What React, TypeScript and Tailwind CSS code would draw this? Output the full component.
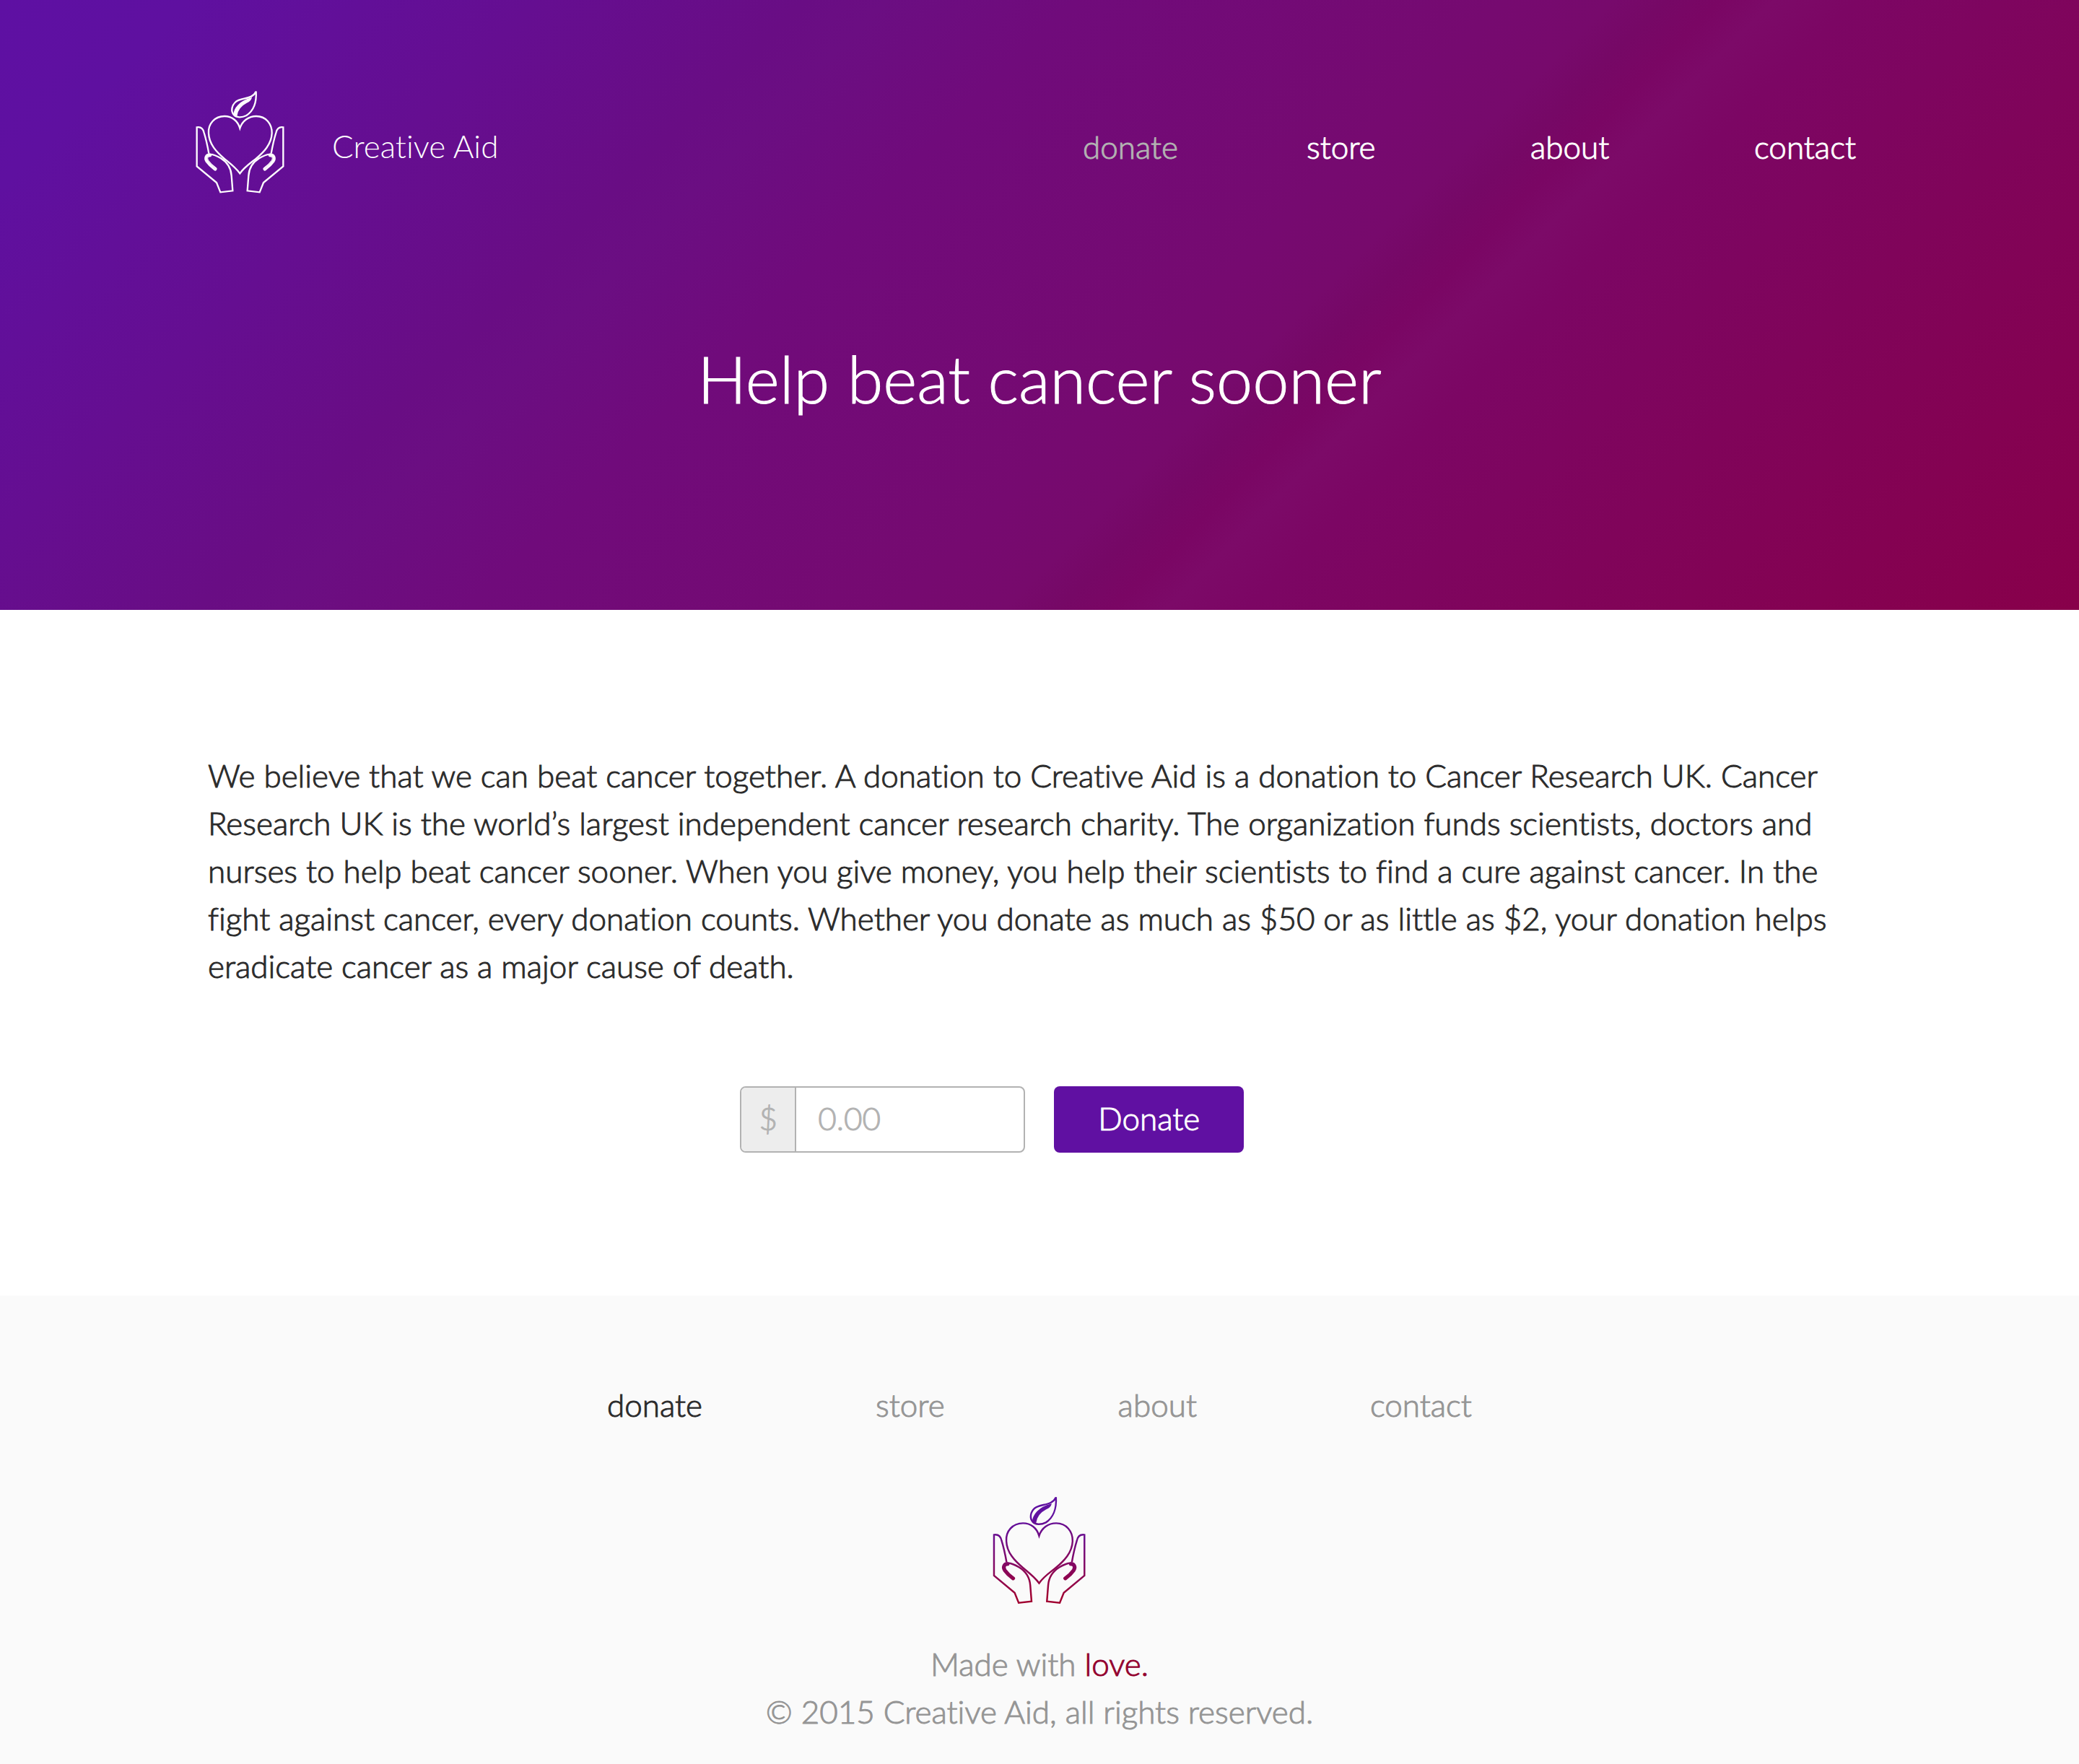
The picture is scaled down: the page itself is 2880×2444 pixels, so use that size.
import React from 'react';

const links = ['donate', 'store', 'about', 'contact'];

function Hand({ accent }: { accent: string }) {
  return (
    <>
      <path d="M118 308C113 280 108 254 98 222C94 203 82 197 68 199L68 361L150 429L166 469L217 463L212 400C210 370 195 345 168 328C150 317 134 309 118 312" />
      <path d="M122 315C108 314 103 328 111 340C121 354 133 364 144 372" strokeWidth="15" strokeLinecap="round" />
      <path d="M117 319C108 324 112 335 120 345C128 355 136 362 144 371" stroke={accent} strokeWidth="3" strokeLinecap="round" />
    </>
  );
}

function Logo({ className, stroke, accent }: { className: string; stroke: string; accent: string }) {
  return (
    <svg viewBox="0 0 480 510" className={className} fill="none" stroke={stroke} strokeWidth="7" aria-hidden="true">
      <defs>
        <linearGradient id="brand" gradientUnits="userSpaceOnUse" x1="200" y1="130" x2="247" y2="440">
          <stop offset="0" stopColor="#6010a0" />
          <stop offset="1" stopColor="#a00030" />
        </linearGradient>
      </defs>
      <path d="M247 203C238 172 214 153 183 153C142 153 114 185 117 224C119 270 150 302 184 331C206 349 229 366 247 391C264 366 288 350 312 331C346 303 378 270 380 224C381 185 355 153 315 153C283 153 257 172 247 203Z" />
      <path d="M314 50C317 96 302 132 274 150C254 160 232 159 222 148C208 132 213 108 230 93C253 74 297 86 314 50Z" strokeMiterlimit="3" />
      <path d="M222 148C222 120 248 90 294 78C290 90 281 93 273 97C250 109 236 126 233 152Z" fill={stroke} strokeWidth="4" />
      <Hand accent={accent} />
      <g transform="translate(495 0) scale(-1 1)">
        <Hand accent={accent} />
      </g>
    </svg>
  );
}

export default function App() {
  return (
    <div className="bg-white font-['Lato',sans-serif] text-[44px] leading-[66px] font-light text-[#2b2b2b] [font-variant-ligatures:none]">
      <header className="bg-[linear-gradient(135deg,#5e10a3_0%,#5f10a0_7%,#650e91_20%,#690d84_30%,#6b0e82_33%,#700b7b_40%,#760a70_56%,#770a6c_60%,#760866_62%,#7a0664_64%,#7c0a68_66%,#7c0664_69%,#80045a_80%,#88004a_100%)] pt-[110px] pb-[255px] text-white">
        <div className="flex items-center justify-between pr-[140px] pl-[250px]">
          <a href="#home" className="flex items-center gap-[50px]">
            <Logo className="h-[170px] w-[160px]" stroke="#ffffff" accent="#e3d5ec" />
            <span className="pt-[14px]">Creative Aid</span>
          </a>
          <nav aria-label="Main" className="grid grid-cols-[repeat(4,310px)] pt-[16px] [-webkit-text-stroke-width:1px]">
            {links.map((l) => (
              <a key={l} href={`#${l}`} className={l === 'donate' ? 'text-[#b2b2b2]' : 'text-white'}>
                {l}
              </a>
            ))}
          </nav>
        </div>
        <h1 className="pt-[178px] text-center text-[90px] leading-[132px] [-webkit-text-stroke-width:1px]">
          Help beat cancer sooner
        </h1>
      </header>

      <main className="px-[10%] pt-[196px] pb-[198px] [-webkit-text-stroke-width:1px]">
        <p>
          We believe that we can beat cancer together. A donation to Creative Aid is a donation to Cancer Research UK.
          Cancer Research UK is the world’s largest independent cancer research charity. The organization funds
          scientists, doctors and nurses to help beat cancer sooner. When you give money, you help their scientists to
          find a cure against cancer. In the fight against cancer, every donation counts. Whether you donate as much as
          $50 or as little as $2, your donation helps eradicate cancer as a major cause of death.
        </p>
        <form className="flex gap-10 pt-[134px] pl-[32%]" onSubmit={(e) => e.preventDefault()}>
          <div className="flex h-[92px] w-[395px] overflow-hidden rounded-lg border-2 border-[#b2b2b2]">
            <label htmlFor="amount" className="flex w-[76px] items-center justify-center border-r-2 border-[#b2b2b2] bg-[#ededed] pb-1 text-[#b2b2b2]">
              $
            </label>
            <input
              id="amount"
              type="text"
              placeholder="0.00"
              className="min-w-0 flex-1 px-[30px] pb-1 outline-none placeholder:text-[#b2b2b2]"
            />
          </div>
          <button type="submit" className="h-[92px] w-[263px] rounded-lg bg-[#6010a2] pb-1 text-white">
            Donate
          </button>
        </form>
      </main>

      <footer className="bg-[#fafafa] pt-[118px] pb-[42px] text-center text-[#959595] [-webkit-text-stroke-width:1px]">
        <nav aria-label="Footer" className="flex justify-center gap-[240px]">
          {links.map((l) => (
            <a key={l} href={`#${l}`} className={l === 'donate' ? 'text-[#2b2b2b]' : 'text-[#959595]'}>
              {l}
            </a>
          ))}
        </nav>
        <div className="flex justify-center pt-[78px] pr-[6px]">
          <Logo className="h-[178px] w-[168px]" stroke="url(#brand)" accent="none" />
        </div>
        <p className="pt-[37px]">
          Made with <span className="text-[#93002e]">love.</span>
        </p>
        <p>© 2015 Creative Aid, all rights reserved.</p>
      </footer>
    </div>
  );
}
